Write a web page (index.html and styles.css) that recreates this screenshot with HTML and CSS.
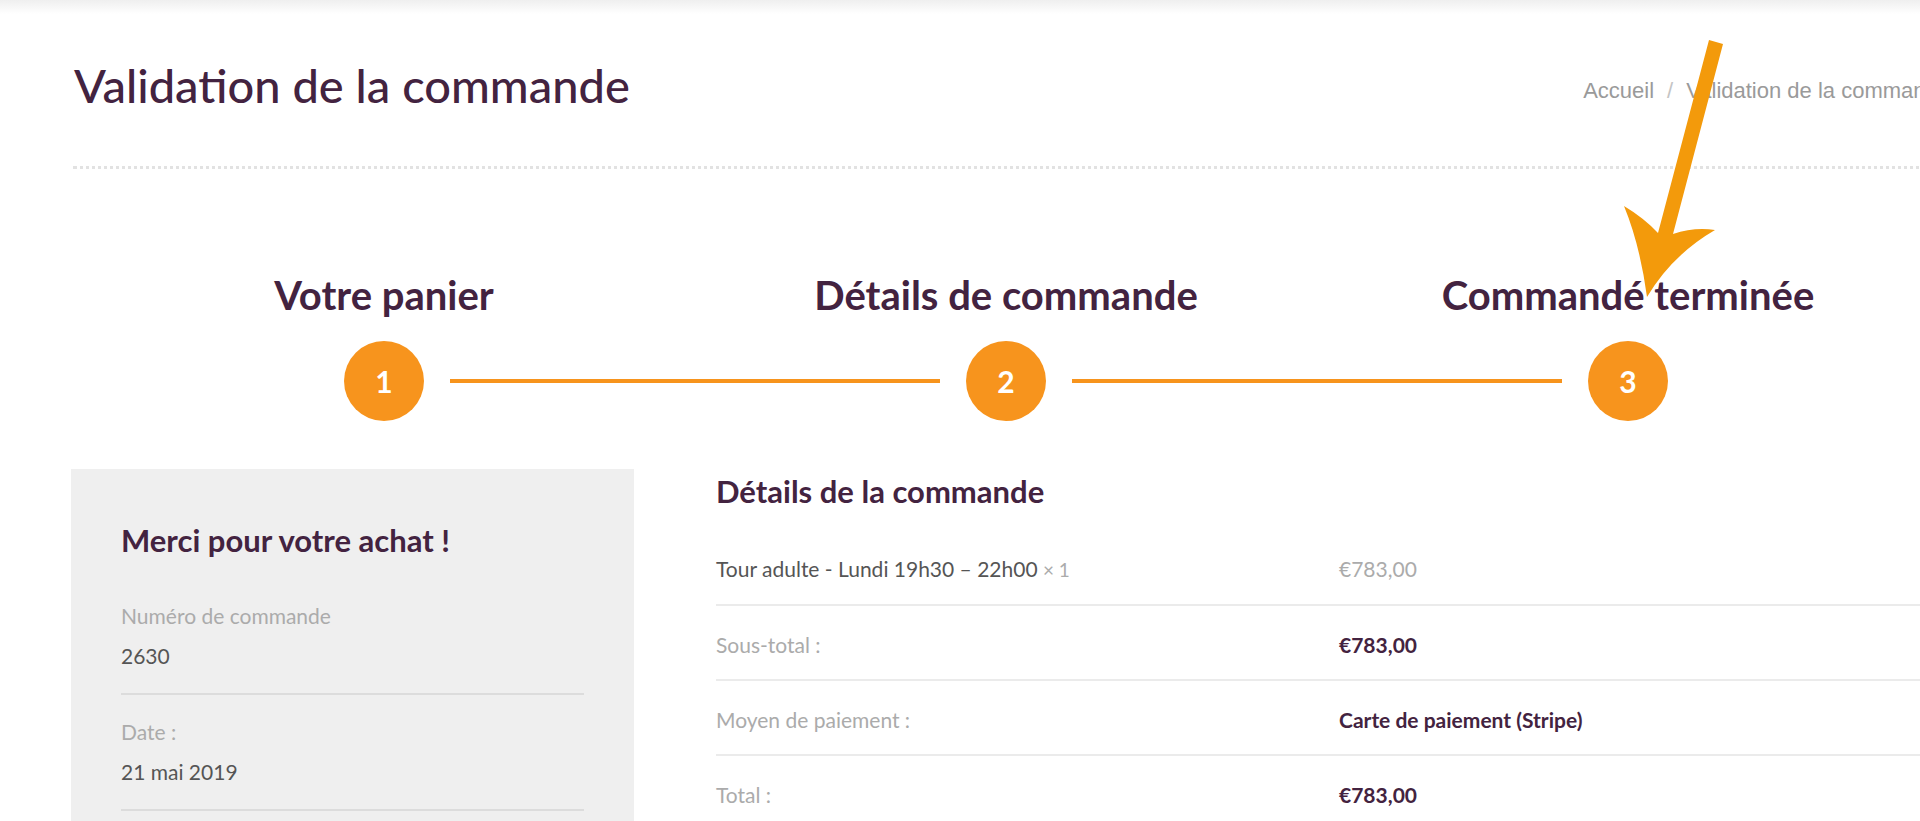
FILE: index.html
```html
<!DOCTYPE html>
<html lang="fr">
<head>
<meta charset="utf-8">
<title>Validation de la commande</title>
<link rel="stylesheet" href="styles.css">
</head>
<body>
<div class="topshade"></div>
<div class="page">
  <header class="header">
    <h1 class="title">Validation de la commande</h1>
    <nav class="breadcrumb"><span>Accueil</span><span class="sep">/</span><span>Validation de la commande</span></nav>
  </header>

  <section class="steps">
    <div class="step-titles">
      <h2 class="step-title">Votre panier</h2>
      <h2 class="step-title">Détails de commande</h2>
      <h2 class="step-title">Commandé terminée</h2>
    </div>
    <div class="step-track">
      <div class="circle">1</div>
      <div class="connector"></div>
      <div class="circle">2</div>
      <div class="connector"></div>
      <div class="circle">3</div>
    </div>
  </section>

  <section class="content">
    <aside class="panel">
      <h3 class="panel-title">Merci pour votre achat !</h3>
      <div class="info-item">
        <div class="info-label">Numéro de commande</div>
        <div class="info-value">2630</div>
      </div>
      <div class="info-item">
        <div class="info-label">Date :</div>
        <div class="info-value">21 mai 2019</div>
      </div>
    </aside>

    <div class="details">
      <h3 class="details-title">Détails de la commande</h3>
      <div class="row">
        <div class="cell-product">Tour adulte - Lundi 19h30 – 22h00 <span class="qty">× 1</span></div>
        <div class="cell-price">€783,00</div>
      </div>
      <div class="row">
        <div class="cell-label">Sous-total :</div>
        <div class="cell-strong">€783,00</div>
      </div>
      <div class="row">
        <div class="cell-label">Moyen de paiement :</div>
        <div class="cell-strong">Carte de paiement (Stripe)</div>
      </div>
      <div class="row">
        <div class="cell-label">Total :</div>
        <div class="cell-strong">€783,00</div>
      </div>
    </div>
  </section>
</div>

<svg class="annotation" width="1920" height="821" viewBox="0 0 1920 821" aria-hidden="true">
  <path d="M1709 40 L1723 44 L1673 234 Q1694 227 1715 230 Q1672 255 1647 297 Q1640 245 1624 206 Q1644 218 1658 233 Z" fill="#f39a0b"/>
</svg>
</body>
</html>
```

FILE: styles.css
```css
html, body {
  margin: 0;
  padding: 0;
  width: 1920px;
  height: 821px;
  overflow: hidden;
  background: #ffffff;
}

body {
  position: relative;
  font-family: Lato, "Noto Sans", sans-serif;
  color: #555555;
}

.topshade {
  height: 14px;
  background: linear-gradient(#efefef, #ffffff);
}

.page {
  margin-left: 73px;
  width: 1866px;
}

.header {
  display: flex;
  justify-content: space-between;
  align-items: center;
  padding: 43px 0 53px;
  border-bottom: 3px dotted #e2e2e2;
}

.title {
  margin: 0 0 0 1px;
  font-size: 47px;
  font-weight: 500;
  line-height: 56px;
  color: #432340;
}

.breadcrumb {
  padding-top: 12px;
  margin-right: -11px;
  font-family: "Liberation Sans", Arial, sans-serif;
  font-size: 22px;
  color: #9a9a9a;
  white-space: nowrap;
}

.breadcrumb .sep {
  margin: 0 13px;
  color: #c4c4c4;
}

.steps {
  margin-top: 102px;
}

.step-titles {
  display: grid;
  grid-template-columns: repeat(3, 1fr);
}

.step-title {
  margin: 0;
  text-align: center;
  font-size: 40px;
  font-weight: 700;
  line-height: 48px;
  color: #432340;
}

.step-track {
  display: flex;
  align-items: center;
  padding: 0 271px;
  margin-top: 22px;
}

.circle {
  flex: none;
  width: 80px;
  height: 80px;
  border-radius: 50%;
  background: #f7941d;
  color: #ffffff;
  font-size: 30px;
  font-weight: 700;
  display: flex;
  align-items: center;
  justify-content: center;
}

.connector {
  flex: 1;
  height: 4px;
  margin: 0 26px;
  background: #f7941d;
}

.content {
  display: flex;
  margin-top: 48px;
}

.panel {
  flex: none;
  width: 463px;
  margin-left: -2px;
  padding: 53px 50px 0;
  height: 500px;
  background: #efefef;
}

.panel-title {
  margin: 0 0 21px;
  font-size: 31px;
  font-weight: 700;
  line-height: 36px;
  color: #432340;
}

.info-item {
  padding: 22px 0;
  border-bottom: 2px solid #dcdcdc;
  font-size: 21px;
  line-height: 30px;
}

.info-label {
  color: #ababab;
}

.info-value {
  margin-top: 10px;
  color: #555555;
}

.details {
  flex: 1;
  margin-left: 82px;
}

.details-title {
  margin: 4px 0 21px;
  font-size: 31px;
  font-weight: 700;
  line-height: 36px;
  color: #432340;
}

.row {
  display: grid;
  grid-template-columns: 623px 1fr;
  padding: 24px 0 19px;
  border-bottom: 2px solid #ebebeb;
  margin-right: -20px;
  font-size: 21px;
  line-height: 30px;
}

.cell-product {
  color: #555555;
}

.qty {
  color: #ababab;
  font-size: 19px;
}

.cell-price {
  color: #ababab;
}

.cell-label {
  color: #ababab;
}

.cell-strong {
  font-weight: 700;
  color: #432340;
}

.annotation {
  position: absolute;
  top: 0;
  left: 0;
  z-index: 10;
  pointer-events: none;
}
```
